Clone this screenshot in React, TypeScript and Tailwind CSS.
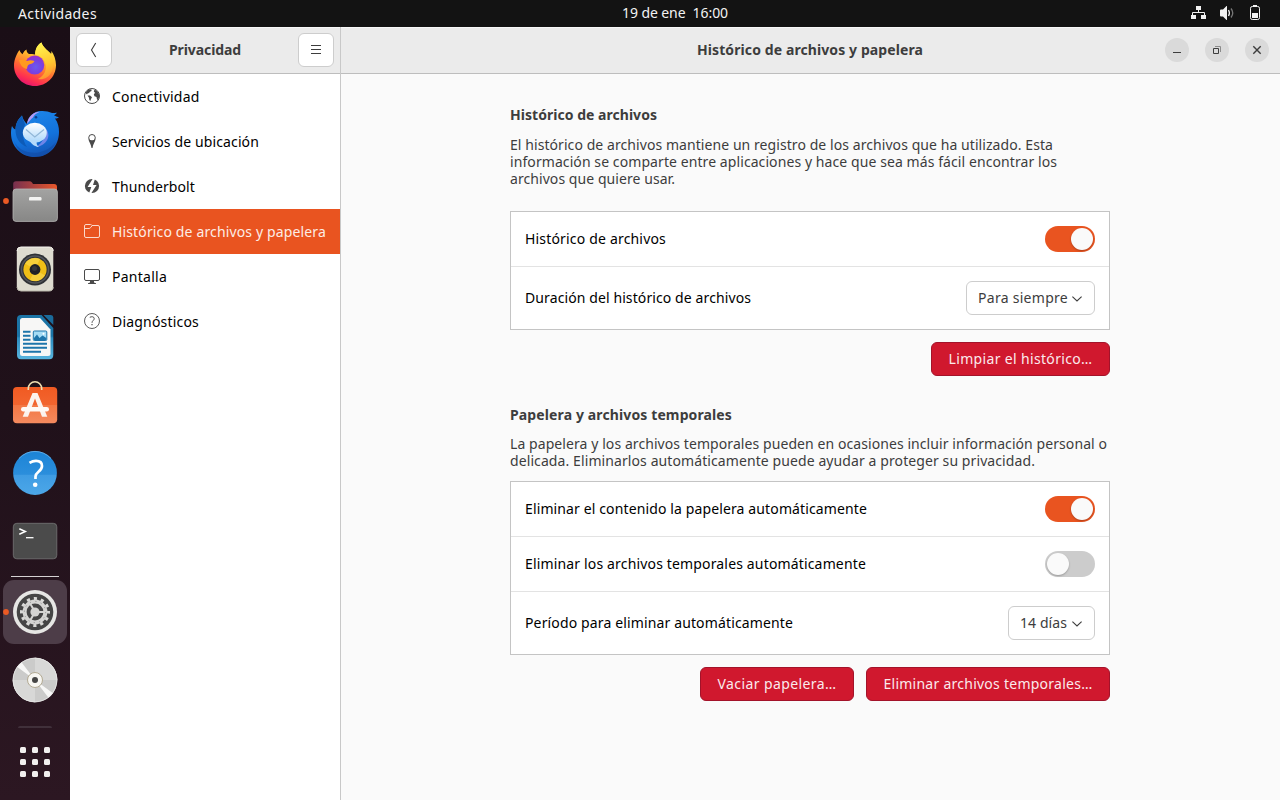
import type { ReactNode } from "react";

function DockItem({ box, active, children }: { box: string; active?: boolean; children: ReactNode }) {
  return (
    <div className={active ? "h-16 w-16 rounded-[11px] bg-[#4d3d48]" : "h-16 w-16"}>
      <svg viewBox={box} className="h-16 w-16">{children}</svg>
    </div>
  );
}

function Firefox() {
  return (
    <DockItem box="3 33 64 64">
      <defs>
        <linearGradient id="ff-body" x1="0.75" y1="0.05" x2="0.35" y2="1">
          <stop offset="0" stopColor="#fff14a" />
          <stop offset="0.35" stopColor="#ffb52e" />
          <stop offset="0.62" stopColor="#ff6a33" />
          <stop offset="0.85" stopColor="#ff2f51" />
          <stop offset="1" stopColor="#e5156f" />
        </linearGradient>
        <radialGradient id="ff-globe" cx="0.55" cy="0.6" r="0.6">
          <stop offset="0" stopColor="#6a5af0" />
          <stop offset="0.6" stopColor="#7a3fe0" />
          <stop offset="1" stopColor="#a02fc8" />
        </radialGradient>
        <linearGradient id="ff-tail" x1="0.4" y1="0" x2="0.6" y2="1">
          <stop offset="0" stopColor="#fff44f" />
          <stop offset="0.6" stopColor="#ffc62f" />
          <stop offset="1" stopColor="#ff9030" />
        </linearGradient>
      </defs>
      <path d="M19.500 50 C20 52 21.500 53.500 22.500 54.200 C23.500 52 25 50.300 26.500 49.500 C26.500 51.500 27.500 53 29 54 C31 54 33 53.500 35 54.500 C35.500 48 38 44.500 41.500 42.500 C42 45.500 45 48.500 49 52 C50 52.500 50.500 53 51 54 C51.500 53 51.500 52 51.200 50.800 C54 54.500 56 60 56 65 C56 77 46.500 86 35 86 C23 86 14 77 14 65.500 C14 60 16.500 54 19.500 50 Z" fill="url(#ff-body)" />
      <path d="M35 54.500 C35.500 48 38 44.500 41.500 42.500 C42 45.500 46 49 49 52 C54 58 54.500 65 52 71 C49 78 43 80 38 79 C44 76 47 70 45.500 64 C44 58 40 56 35 54.500 Z" fill="url(#ff-tail)" />
      <circle cx="34.700" cy="65" r="9.600" fill="url(#ff-globe)" />
      <path d="M19 60 C22 59 25 59.500 27 61 C29 60 32 60 34.500 61 C33.500 63.500 31 63.800 29 64.500 C27.500 65.500 27.300 66.500 27 69 C22 68 20 64 19 60 Z" fill="#ff9a1f" />
    </DockItem>
  );
}

function Thunderbird() {
  return (
    <DockItem box="3 101 64 64">
      <defs>
        <linearGradient id="tb-body" x1="0.3" y1="0" x2="0.6" y2="1">
          <stop offset="0" stopColor="#1d86e8" />
          <stop offset="0.6" stopColor="#1272dc" />
          <stop offset="1" stopColor="#1554b4" />
        </linearGradient>
        <linearGradient id="tb-mail" x1="0" y1="0" x2="0" y2="1">
          <stop offset="0" stopColor="#ffffff" />
          <stop offset="1" stopColor="#a9d6fb" />
        </linearGradient>
      </defs>
      <path d="M27 124 C28 116 34 111.500 41 111 C45 110.800 49 111.500 52 113 C54 113 56 113 57 112.800 C56 114 55 114.800 54 115.200 C56 116.500 58 117 59 117 C57.500 118.500 56 118.800 55 118.500 C58 122.500 59 127 59 132 C59 146 49 157 35 157 C21 157 11 146.500 11 133 C11 130 11.500 127.500 12 126 C13 128 14 129 15.500 129.500 C15.500 124 18 119 22 115.500 C23 119.500 24.500 121.500 27 124 Z" fill="url(#tb-body)" />
      <path d="M15.500 130 C15.500 124 18 119 22 115.500 C22.500 120 25 122 25 125 C22 130 22 140 27 147 C19 144 15.500 137 15.500 130 Z" fill="#0d5bb8" />
      <path d="M27 124 C28 116 34 112 40 111.800 C36 113.500 34 115 33 117.500 C31 119 29 121.500 27 124 Z" fill="#b39af5" />
      <circle cx="36" cy="117.300" r="1.300" fill="#0d3d8a" />
      <path d="M46 129 C52 136 46 146 36 147 C42 143 46 137 46 129 Z" fill="#8e8ff0" opacity="0.75" />
      <ellipse cx="34.800" cy="132.800" rx="12" ry="10" fill="url(#tb-mail)" />
      <path d="M29 140 C32 145 36 147 39 147 C36 145 36.500 142 37 140 Z" fill="#b5dafb" />
      <path d="M26 129.500 L34.800 137 L44 129.500" fill="none" stroke="#91b7d8" strokeWidth="1.200" />
      <path d="M14 141 C20 155 43 158 56 142 C52 152 44 157 35 157 C25 157 17 151 14 141 Z" fill="#1047a0" opacity="0.5" />
    </DockItem>
  );
}

function Files() {
  return (
    <DockItem box="3 169 64 64">
      <defs>
        <linearGradient id="fl-back" x1="0" y1="0" x2="1" y2="0">
          <stop offset="0" stopColor="#77304f" />
          <stop offset="1" stopColor="#e9572b" />
        </linearGradient>
        <linearGradient id="fl-front" x1="0" y1="0" x2="0" y2="1">
          <stop offset="0" stopColor="#a3a3a2" />
          <stop offset="1" stopColor="#878786" />
        </linearGradient>
      </defs>
      <path d="M13.200 200 V184 Q13.200 181.200 16 181.200 H29.500 Q31 181.200 32 182.600 L33 184 H54 Q57 184 57 187 V200 Z" fill="url(#fl-back)" />
      <rect x="13" y="189" width="44.400" height="32.400" rx="3" fill="url(#fl-front)" stroke="#b6b6b5" strokeWidth="0.800" />
      <rect x="29" y="197" width="12.500" height="3.600" rx="1.200" fill="#f3f3f2" />
      <circle cx="6" cy="201" r="2.900" fill="#ea5a24" />
    </DockItem>
  );
}

function Rhythmbox() {
  return (
    <DockItem box="3 237 64 64">
      <rect x="16.800" y="247" width="36.500" height="44" rx="4" fill="#dedbd0" />
      <path d="M17 251 Q17 247 21 247 H49 Q53.200 247 53.200 251" fill="none" stroke="#f5f3ee" />
      <path d="M17 287 Q17 291 21 291 H49 Q53.200 291 53.200 287" fill="none" stroke="#b9b6aa" />
      <circle cx="35" cy="269.500" r="16" fill="#2f3136" />
      <circle cx="35" cy="269.500" r="13.500" fill="none" stroke="#54565c" strokeWidth="1.500" />
      <circle cx="35" cy="269.500" r="11.600" fill="#efbe16" />
      <path d="M35 269.500 L25 263.500 A11.600 11.600 0 0 1 40 259 Z M35 269.500 L45 275.500 A11.600 11.600 0 0 1 30 280 Z" fill="#f9d64a" opacity="0.7" />
      <circle cx="35" cy="269.500" r="5.400" fill="#202226" />
      <circle cx="34.500" cy="268.500" r="2.500" fill="#34363b" />
    </DockItem>
  );
}

function Writer() {
  return (
    <DockItem box="3 305 64 64">
      <defs>
        <linearGradient id="wr" x1="0" y1="0" x2="0" y2="1">
          <stop offset="0.48" stopColor="#1b74a6" />
          <stop offset="0.52" stopColor="#2d8cbf" />
          <stop offset="1" stopColor="#58b4dd" />
        </linearGradient>
      </defs>
      <path d="M17 319 Q17 315 21 315 H41.500 L53.300 328 V355 Q53.300 359.200 49.300 359.200 H21 Q17 359.200 17 355 Z" fill="url(#wr)" />
      <path d="M43.500 315 H51 Q53.300 315 53.300 317.500 V325 Z" fill="#1a6b9b" />
      <path d="M20 320.500 Q20 318 22.500 318 H40 L50.500 329.500 V353.500 Q50.500 356 48 356 H22.500 Q20 356 20 353.500 Z" fill="#f7f7f6" />
      <path d="M23 331.800 H30.500 M23 335.800 H30.500 M23 339.800 H30.500 M23 343.800 H47 M23 347.800 H47 M23 351.800 H41" stroke="#1d75ab" strokeWidth="1.900" />
      <rect x="33.300" y="331" width="13.500" height="9.500" rx="1" fill="#a5dcf5" stroke="#1d75ab" />
      <path d="M34 340 V338 L37 334.500 L39.500 338 L42.500 335.500 L46.300 338 V340 Z" fill="#1d75ab" />
      <circle cx="43.500" cy="333.800" r="1" fill="#fff" />
    </DockItem>
  );
}

function Store() {
  return (
    <DockItem box="3 373 64 64">
      <defs>
        <linearGradient id="st" x1="0" y1="0" x2="0" y2="1">
          <stop offset="0" stopColor="#f05a22" />
          <stop offset="0.49" stopColor="#f2652f" />
          <stop offset="0.51" stopColor="#f37744" />
          <stop offset="1" stopColor="#f48a5f" />
        </linearGradient>
      </defs>
      <rect x="13" y="387" width="44.200" height="36.200" rx="4" fill="url(#st)" />
      <path d="M28.300 390 V388.500 A6.700 6.700 0 0 1 41.700 388.500 V390" fill="none" stroke="#f0dfb2" strokeWidth="1.600" />
      <path d="M32.500 393 H37.500 L47.300 416.800 H42 L35 398.500 L28 416.800 H22.700 Z" fill="#fbf3ee" />
      <rect x="21" y="407" width="28" height="4.400" rx="2.200" fill="#fff9f5" />
    </DockItem>
  );
}

function Help() {
  return (
    <DockItem box="3 441 64 64">
      <defs>
        <linearGradient id="hp" x1="0" y1="0" x2="0" y2="1">
          <stop offset="0" stopColor="#1c84d6" />
          <stop offset="0.53" stopColor="#2b8edc" />
          <stop offset="0.55" stopColor="#3f9ce3" />
          <stop offset="1" stopColor="#4ca7e8" />
        </linearGradient>
      </defs>
      <circle cx="35" cy="473" r="21.900" fill="url(#hp)" />
      <path d="M19 458.500 A21.600 21.600 0 0 1 51 458.500" fill="none" stroke="#6db6ee" strokeWidth="0.800" />
      <path d="M29.500 462.800 C32 461.300 34 460.900 36 460.900 C39.900 460.900 42 463 42 466 C42 471.500 35.500 472 35.500 476.500 V479" fill="none" stroke="#fff" strokeWidth="2.700" />
      <circle cx="35.200" cy="484.800" r="2.300" fill="#fff" />
    </DockItem>
  );
}

function Terminal() {
  return (
    <DockItem box="3 509 64 64">
      <rect x="13.300" y="523.300" width="43.500" height="35.500" rx="3.500" fill="#4b4b4b" stroke="#767676" strokeWidth="0.800" />
      <path d="M19.300 528.800 L25.300 531.500 L19.300 534.200" fill="none" stroke="#fff" strokeWidth="1.500" />
      <path d="M26 537.700 H33.500" stroke="#fff" strokeWidth="1.300" />
    </DockItem>
  );
}

function Settings() {
  return (
    <DockItem box="3 580 64 64" active>
      <circle cx="35" cy="612" r="22" fill="#e6e6e4" />
      <circle cx="35" cy="612" r="18.300" fill="#454545" />
      <circle cx="35" cy="612" r="13.500" fill="none" stroke="#d9d9d7" strokeWidth="3" strokeDasharray="3.200 3.869" strokeDashoffset="1.600" />
      <circle cx="35" cy="612" r="10.400" fill="none" stroke="#d4d4d2" strokeWidth="4" />
      <circle cx="35" cy="612" r="4.600" fill="#d4d4d2" />
      <path d="M35 612 H45 M35 612 L30 603.300 M35 612 L30 620.700" stroke="#d4d4d2" strokeWidth="2" />
      <circle cx="35" cy="612" r="10.600" fill="none" stroke="#8f8f8f" strokeWidth="0.900" strokeDasharray="1.200 4.350" />
      <circle cx="6" cy="612" r="2.900" fill="#ea5a24" />
    </DockItem>
  );
}

function Disc() {
  return (
    <DockItem box="3 648 64 64">
      <circle cx="35" cy="680" r="22.300" fill="#cbcbca" />
      <path d="M35 680 V657.700 A22.300 22.300 0 0 1 57.300 680 Z M35 680 V702.300 A22.300 22.300 0 0 1 12.700 680 Z" fill="#d8d8d7" />
      <path d="M35 680 L17 666.800 A22.300 22.300 0 0 1 21.500 662.300 Z M35 680 L53 693.200 A22.300 22.300 0 0 1 48.500 697.700 Z" fill="#f7f7f6" />
      <circle cx="35" cy="680" r="21.900" fill="none" stroke="#e7e7e6" strokeWidth="0.800" />
      <circle cx="35" cy="680" r="7.500" fill="#f7f6f2" stroke="#b3aa93" />
      <circle cx="35" cy="680" r="3" fill="#454545" />
    </DockItem>
  );
}

function Dock() {
  return (
    <nav className="flex h-[773px] w-[70px] flex-none flex-col items-center overflow-hidden bg-linear-to-b from-[#1a0e16] via-[#20111a] to-[#2c1722] pt-[6px]">
      <div className="flex flex-col gap-1">
        <Firefox />
        <Thunderbird />
        <Files />
        <Rhythmbox />
        <Writer />
        <Store />
        <Help />
        <Terminal />
      </div>
      <div className="mt-[3px] mb-[3px] h-px w-12 flex-none bg-[#d5d1d3]" />
      <div className="flex flex-col gap-1">
        <Settings />
        <Disc />
      </div>
      <div className="mt-[14px] h-[2px] w-[34px] flex-none rounded-t-full bg-[#40303a]" />
      <div className="mt-[19px] grid grid-cols-3 gap-[6px]">
        {[0, 1, 2, 3, 4, 5, 6, 7, 8].map((n) => (
          <div key={n} className="h-[6px] w-[6px] rounded-[1.500px] bg-[#f2f0ef]" />
        ))}
      </div>
    </nav>
  );
}

function TopBar() {
  return (
    <header className="flex h-[27px] items-center bg-[#131313] pr-[17px] text-[#f2f2f2]">
      <span className="w-[622px] pl-[18px] leading-[27px] tracking-[0.388px]">Actividades</span>
      <span className="self-start leading-[25px] tracking-[-0.082px] whitespace-pre">{"19 de ene  16:00"}</span>
      <div className="ml-auto flex gap-3 self-start pt-[5px]">
        <svg viewBox="1191 5 16 16" className="h-4 w-4" fill="#f2f2f2">
          <path d="M1196 6h5v4h-5zM1191 15h5v4h-5zM1201 15h5v4h-5z" />
          <path d="M1198 10h1v2h5q1 0 1 1v2h-1v-2h-11v2h-1v-2q0-1 1-1h5z" />
        </svg>
        <svg viewBox="1219 5 16 16" className="h-4 w-4">
          <path d="M1220 10.500q0-1 1-1h2l3.500-3.500h.5v14h-.5l-3.500-3.500h-2q-1 0-1-1z" fill="#f2f2f2" />
          <path d="M1228.500 10q1.800 3 0 6" fill="none" stroke="#f2f2f2" strokeWidth="1.300" />
          <path d="M1231 8.500q3.500 4.500 0 9" fill="none" stroke="#777" strokeWidth="1.300" />
        </svg>
        <svg viewBox="1247 5 16 16" className="h-4 w-4">
          <path d="M1253 5h4v1.500h-4z" fill="#f2f2f2" />
          <rect x="1250.500" y="6.500" width="9" height="13" rx="1.800" fill="none" stroke="#f2f2f2" />
          <path d="M1252 13h6v5h-6z" fill="#f2f2f2" />
        </svg>
      </div>
    </header>
  );
}

function NavRow({ icon, label, tracking, selected }: { icon: ReactNode; label: string; tracking: string; selected?: boolean }) {
  return (
    <a className={"flex h-[45px] items-center gap-3 pl-[14px] whitespace-nowrap " + (selected ? "bg-[#e95420] text-[#fdece5]" : "text-black")}>
      <svg viewBox="0 0 16 17" className="h-[17px] w-4 flex-none">{icon}</svg>
      <span className={tracking}>{label}</span>
    </a>
  );
}

function Sidebar() {
  return (
    <aside className="w-[271px] flex-none border-r border-[#c8c8c8] bg-white">
      <div className="flex h-[47px] items-center justify-between border-t border-b border-t-[#f7f7f7] border-b-[#bdbdbd] bg-[#ebebeb] px-[6px] pb-px">
        <button className="flex h-[34px] w-9 items-center justify-center rounded-[6px] border border-[#cdcdcd] bg-white">
          <svg viewBox="0 0 16 16" className="h-4 w-4" fill="none" stroke="#3d3d3d" strokeWidth="1.100">
            <path d="M9.700 1 L5.500 8 L9.700 15" />
          </svg>
        </button>
        <span className="-mt-px font-bold tracking-[-0.101px] text-[#3d3d3d]">Privacidad</span>
        <button className="flex h-[34px] w-9 items-center justify-center rounded-[6px] border border-[#cdcdcd] bg-white">
          <svg viewBox="0 0 16 16" className="h-4 w-4" fill="#3d3d3d">
            <path d="M3 3h10v1H3zM3 7h10v1H3zM3 11h10v1H3z" />
          </svg>
        </button>
      </div>
      <NavRow
        label="Conectividad"
        tracking="tracking-[0.204px]"
        icon={
          <>
            <circle cx="8" cy="8" r="7.500" fill="none" stroke="#4a4a4a" />
            <path d="M1.500 5 L3.500 2.300 L5.500 1.200 L7.500 1.500 L7.500 3 L6 3.800 L5 5 L3.500 5.500 L3 6.500 Z M3.500 7.500 L6 7.500 L8 9.200 L7 11 L6.300 13 L5.300 12 L5 9.800 Z M10.500 1.500 L13 3 L15 6 L15.300 9 L14 12 L13 11.500 L12.500 9 L10.500 8.300 L9.800 6.500 L11 4.800 L9.800 3.500 Z" fill="#4a4a4a" />
          </>
        }
      />
      <NavRow
        label="Servicios de ubicación"
        tracking="tracking-[0.123px]"
        icon={
          <>
            <circle cx="8" cy="4.800" r="3.300" fill="none" stroke="#4a4a4a" />
            <path d="M4.300 5.500 C4.800 9 7 11 7.500 15 H8.500 C9 11 11.200 9 11.700 5.500 C11 8.300 5 8.300 4.300 5.500 Z" fill="#4a4a4a" />
          </>
        }
      />
      <NavRow
        label="Thunderbolt"
        tracking="tracking-[0.111px]"
        icon={
          <>
            <circle cx="8" cy="8" r="7.100" fill="#4a4a4a" />
            <path d="M9.200 0 L3.600 9 L7.300 9 L4.800 16 L6.800 16 L12.600 7 L9 7 L11.300 0 Z" fill="#fff" />
          </>
        }
      />
      <NavRow
        selected
        label="Histórico de archivos y papelera"
        tracking="tracking-[0.142px]"
        icon={
          <g fill="none" stroke="#fbd9cb">
            <path d="M0.500 3 Q0.500 1.500 2 1.500 H6.500 Q7.500 1.500 8 2.500 H14 Q15.500 2.500 15.500 4 V13 Q15.500 14.500 14 14.500 H2 Q0.500 14.500 0.500 13 Z" />
            <path d="M0.500 5.500 H5 Q6 5.500 6.700 4.500 L8 2.800" />
          </g>
        }
      />
      <NavRow
        label="Pantalla"
        tracking="tracking-[0.255px]"
        icon={
          <>
            <rect x="0.500" y="1.500" width="15" height="11" rx="1.500" fill="none" stroke="#4a4a4a" />
            <path d="M6 13h4v1.500l2 .8v.7H4v-.7l2-.8z" fill="#4a4a4a" />
          </>
        }
      />
      <NavRow
        label="Diagnósticos"
        tracking="tracking-[0.193px]"
        icon={
          <>
            <circle cx="8" cy="8" r="7.500" fill="none" stroke="#4a4a4a" strokeWidth="0.900" />
            <path d="M5.800 4.300 C7.500 3.300 10.200 3.500 10.200 5.600 C10.200 7.500 8 7.600 8 9.800" fill="none" stroke="#4a4a4a" />
            <path d="M7.400 11h1.200v1.300H7.400z" fill="#4a4a4a" />
          </>
        }
      />
    </aside>
  );
}

function WindowButton({ children }: { children: ReactNode }) {
  return (
    <button className="h-6 w-6 rounded-full bg-[#dadada]">
      <svg viewBox="0 0 24 24" className="h-6 w-6">{children}</svg>
    </button>
  );
}

function Row({ label, tracking, tall, children }: { label: string; tracking: string; tall?: boolean; children: ReactNode }) {
  return (
    <div className={"box-content flex items-center justify-between px-[14px] " + (tall ? "h-[62px]" : "h-[54px]")}>
      <span className={"pb-px text-black " + tracking}>{label}</span>
      {children}
    </div>
  );
}

function Toggle({ on }: { on?: boolean }) {
  return (
    <button className={"flex h-[26px] w-[50px] items-center rounded-full px-[2px] " + (on ? "justify-end bg-[#e95420]" : "bg-[#cccccc]")}>
      <span className="h-[22px] w-[22px] rounded-full bg-[#fafafa] shadow-[0_1px_2px_rgba(0,0,0,0.25)]" />
    </button>
  );
}

function Select({ label, className }: { label: string; className: string }) {
  return (
    <button className={"flex h-[34px] items-center justify-between rounded-[6px] border border-[#cdcdcd] bg-white pr-3 pl-[11px] whitespace-nowrap text-[#3d3d3d] " + className}>
      <span className="pb-px">{label}</span>
      <svg viewBox="0 0 10 6" className="mt-px h-[6px] w-[10px] flex-none" fill="none" stroke="#3d3d3d" strokeWidth="1.100">
        <path d="M0.400 0.600 L5 4.900 L9.600 0.600" />
      </svg>
    </button>
  );
}

function DangerButton({ label, className }: { label: string; className: string }) {
  return (
    <button className={"h-[34px] rounded-[6px] border border-[#a3132a] bg-[#d0182e] pb-px text-center whitespace-nowrap text-[#fbeaec] " + className}>
      {label}
    </button>
  );
}

export default function App() {
  return (
    <div className="h-[800px] w-[1280px] overflow-hidden bg-[#fafafa] font-['Noto_Sans',sans-serif] text-[14px] leading-[17px]">
      <TopBar />
      <div className="flex h-[773px]">
        <Dock />
        <Sidebar />
        <main className="min-w-0 flex-1 bg-[#fafafa] text-[#3d3d3d]">
          <div className="grid h-[47px] grid-cols-[1fr_auto_1fr] items-center border-t border-b border-t-[#f7f7f7] border-b-[#bdbdbd] bg-[#ebebeb] pr-[11px] pb-px pl-[10px]">
            <span />
            <h1 className="-mt-px font-bold tracking-[0.097px]">Histórico de archivos y papelera</h1>
            <div className="flex justify-end gap-4">
              <WindowButton>
                <path d="M8 14h8v1H8z" fill="#3d3d3d" />
              </WindowButton>
              <WindowButton>
                <path d="M8.500 10.500h5v5h-5z" fill="none" stroke="#3d3d3d" />
                <path d="M10 8.500h5.500v5.500" fill="none" stroke="#8b8b8b" />
              </WindowButton>
              <WindowButton>
                <path d="M8.300 8.300l7.400 7.400M15.700 8.300l-7.400 7.400" stroke="#3d3d3d" strokeWidth="1.400" />
              </WindowButton>
            </div>
          </div>

          <div className="ml-[169px] w-[600px] pt-8">
            <h2 className="font-bold tracking-[0.033px]">Histórico de archivos</h2>
            <p className="mt-[13px] whitespace-nowrap">
              <span className="tracking-[0.070px]">El histórico de archivos mantiene un registro de los archivos que ha utilizado. Esta</span>
              <br />
              <span className="tracking-[0.083px]">información se comparte entre aplicaciones y hace que sea más fácil encontrar los</span>
              <br />
              <span className="tracking-[0.065px]">archivos que quiere usar.</span>
            </p>
            <div className="mt-6 divide-y divide-[#e3e3e3] border border-[#c4c4c4] bg-white">
              <Row label="Histórico de archivos" tracking="tracking-[0.180px]">
                <Toggle on />
              </Row>
              <Row label="Duración del histórico de archivos" tracking="tracking-[0.101px]" tall>
                <Select label="Para siempre" className="w-[129px] tracking-[0.281px]" />
              </Row>
            </div>
            <div className="mt-3 flex justify-end">
              <DangerButton label="Limpiar el histórico…" className="w-[179px] tracking-[0.341px]" />
            </div>

            <h2 className="mt-[30px] font-bold tracking-[0.122px]">Papelera y archivos temporales</h2>
            <p className="mt-3 whitespace-nowrap">
              <span className="tracking-[0.076px]">La papelera y los archivos temporales pueden en ocasiones incluir información personal o</span>
              <br />
              <span className="tracking-[0.093px]">delicada. Eliminarlos automáticamente puede ayudar a proteger su privacidad.</span>
            </p>
            <div className="mt-3 divide-y divide-[#e3e3e3] border border-[#c4c4c4] bg-white">
              <Row label="Eliminar el contenido la papelera automáticamente" tracking="tracking-[0.124px]">
                <Toggle on />
              </Row>
              <Row label="Eliminar los archivos temporales automáticamente" tracking="tracking-[0.157px]">
                <Toggle />
              </Row>
              <Row label="Período para eliminar automáticamente" tracking="tracking-[0.136px]" tall>
                <Select label="14 días" className="w-[87px] tracking-[0.080px]" />
              </Row>
            </div>
            <div className="mt-3 flex justify-end gap-3">
              <DangerButton label="Vaciar papelera…" className="w-[154px] tracking-[0.407px]" />
              <DangerButton label="Eliminar archivos temporales…" className="w-[244px] tracking-[0.253px]" />
            </div>
          </div>
        </main>
      </div>
    </div>
  );
}
